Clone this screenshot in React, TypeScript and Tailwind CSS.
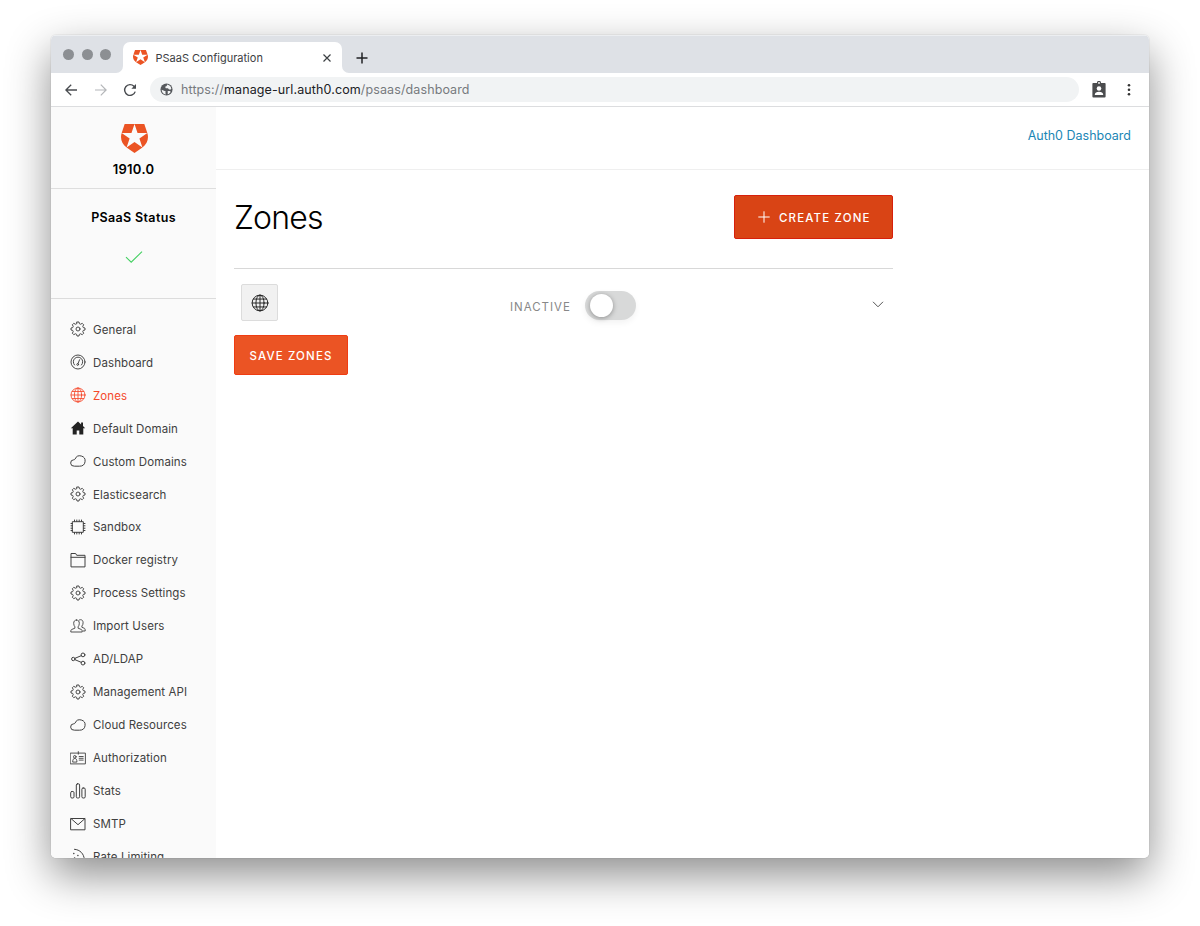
import React from "react";

type IconProps = { className?: string };

const stroke = {
  fill: "none",
  stroke: "currentColor",
  strokeWidth: 1,
  strokeLinecap: "round" as const,
  strokeLinejoin: "round" as const,
};

function Gear() {
  return (
    <svg viewBox="0 0 16 16" className="h-4 w-4" {...stroke} strokeWidth={0.95}>
      <path d="M7 1h2l.4 1.7 1.3.55 1.5-.95 1.5 1.5-.95 1.5.55 1.3L15 7v2l-1.7.4-.55 1.3.95 1.5-1.5 1.5-1.5-.95-1.3.55L9 15H7l-.4-1.7-1.3-.55-1.5.95-1.5-1.5.95-1.5-.55-1.3L1 9V7l1.7-.4.55-1.3-.95-1.5 1.5-1.5 1.5.95 1.3-.55z" />
      <circle cx="8" cy="8" r="2" />
    </svg>
  );
}

function Gauge() {
  return (
    <svg viewBox="0 0 16 16" className="h-4 w-4" {...stroke} strokeWidth={0.95}>
      <circle cx="8" cy="8" r="7" />
      <path d="M4.500 11A4.700 4.700 0 1 1 11.500 11" />
      <path d="M9.600 5.700 8 9.600" />
      <circle cx="7.700" cy="10.500" r=".9" />
    </svg>
  );
}

function Globe({ className = "h-4 w-4" }: IconProps) {
  return (
    <svg viewBox="0 0 16 16" className={className} {...stroke} strokeWidth={0.85}>
      <circle cx="8" cy="8" r="7" />
      <ellipse cx="8" cy="8" rx="3.6" ry="7" />
      <path d="M8 1v14M1 8h14M2.200 4.500h11.600M2.200 11.500h11.600" />
    </svg>
  );
}

function Home() {
  return (
    <svg viewBox="0 0 16 16" className="h-4 w-4">
      <path
        fill="#222"
        d="M8 1.400.8 8.300h1.900v6.200h4v-4h2.600v4h4V8.300h1.900L13 6.100V2.600h-1.900v1.800z"
      />
    </svg>
  );
}

function Cloud() {
  return (
    <svg viewBox="0 0 16 16" className="h-4 w-4" {...stroke}>
      <path d="M4 13.200a3.200 3.200 0 0 1-.3-6.400c.6 0 1-.2 1.400-.8A5.200 5.200 0 1 1 9.800 13.200z" />
    </svg>
  );
}

function Chip() {
  return (
    <svg viewBox="0 0 16 16" className="h-4 w-4" {...stroke}>
      <rect x="2.7" y="2.7" width="10.6" height="10.6" />
      <path d="M4.5 2.5V1M6.8 2.5V1M9.2 2.5V1M11.5 2.5V1M4.5 15v-1.5M6.8 15v-1.5M9.2 15v-1.5M11.5 15v-1.5M2.5 4.5H1M2.5 6.8H1M2.5 9.2H1M2.5 11.5H1M15 4.5h-1.5M15 6.8h-1.5M15 9.2h-1.5M15 11.5h-1.5" />
    </svg>
  );
}

function Folder() {
  return (
    <svg viewBox="0 0 16 16" className="h-4 w-4" {...stroke}>
      <path d="M1 14.5v-13h4.7l1 1.800H15v11.200zM1 5.300h14" />
    </svg>
  );
}

function Users() {
  return (
    <svg viewBox="0 0 16 16" className="h-4 w-4" {...stroke} strokeWidth={0.9}>
      <path d="M6.500 2C4.700 2 3.700 3.300 3.700 5.300c0 1.500.5 2.700 1.200 3.500v1.400L1.600 11.500c-.6.3-.8 1-.8 2.500h11.400c0-1.500-.2-2.200-.8-2.500L8.100 10.200V8.800c.7-.8 1.200-2 1.200-3.500C9.300 3.300 8.300 2 6.500 2z" />
      <path d="M9 2.200c.4-.4 1-.5 1.500-.5 1.700 0 2.600 1.200 2.600 3.100 0 1.400-.5 2.500-1.200 3.200v1.300l2.500 1c.6.3.8 1 .8 2.700h-2" />
    </svg>
  );
}

function Share() {
  return (
    <svg viewBox="0 0 16 16" className="h-4 w-4" {...stroke}>
      <circle cx="3.300" cy="8" r="1.700" />
      <circle cx="13" cy="3.900" r="1.900" />
      <circle cx="13" cy="12.100" r="1.900" />
      <path d="m5 7.300 6.200-2.600M5 8.700l6.200 2.600" />
    </svg>
  );
}

function IdCard() {
  return (
    <svg viewBox="0 0 16 16" className="h-4 w-4" {...stroke} strokeWidth={0.9}>
      <path d="M.6 3.100h14.800v10.800H.6zM8.300 1.600v2.600" />
      <circle cx="4.800" cy="6.800" r="1.300" />
      <path d="M2.700 11.700c0-2.300.7-3.200 2.100-3.200s2.100.9 2.100 3.200zM9.200 6.500h4M9.200 8.300h4M9.200 10.100h4" />
    </svg>
  );
}

function Bars() {
  return (
    <svg viewBox="0 0 16 16" className="h-4 w-4" {...stroke}>
      <rect x=".7" y="8.500" width="3.300" height="6.500" rx="1.200" />
      <rect x="6.300" y=".8" width="3.300" height="14.200" rx="1.200" />
      <rect x="11.900" y="5" width="3.300" height="10" rx="1.200" />
    </svg>
  );
}

function Mail() {
  return (
    <svg viewBox="0 0 16 16" className="h-4 w-4" {...stroke}>
      <path d="M1 2.500h14v11.300H1zM1.200 2.700 8 8.700l6.800-6" />
    </svg>
  );
}

function Rate() {
  return (
    <svg viewBox="0 0 16 16" className="h-4 w-4" {...stroke}>
      <path d="M4.500 1.300c5.500.3 9.500 4.500 9.800 10" />
      <path d="M3.700 5.500h.2M7.800 7.500h.2M4.500 10h.2" strokeWidth="1.300" />
    </svg>
  );
}

function Shield({ className }: IconProps) {
  return (
    <svg viewBox="1.500 0 21 24" preserveAspectRatio="none" className={className}>
      <path
        fill="#eb5424"
        d="M21.980 7.448L19.620 0H4.347L2.020 7.448c-1.352 4.312.03 9.206 3.815 12.015L12.007 24l6.157-4.552c3.755-2.810 5.182-7.688 3.815-12.015l-6.160 4.580 2.343 7.450-6.157-4.597-6.158 4.580 2.358-7.433-6.188-4.550 7.630-.045L12.008 0l2.356 7.404 7.615.044z"
      />
    </svg>
  );
}

const items: { label: string; Icon: () => React.ReactElement; active?: boolean }[] = [
  { label: "General", Icon: Gear },
  { label: "Dashboard", Icon: Gauge },
  { label: "Zones", Icon: () => <Globe />, active: true },
  { label: "Default Domain", Icon: Home },
  { label: "Custom Domains", Icon: Cloud },
  { label: "Elasticsearch", Icon: Gear },
  { label: "Sandbox", Icon: Chip },
  { label: "Docker registry", Icon: Folder },
  { label: "Process Settings", Icon: Gear },
  { label: "Import Users", Icon: Users },
  { label: "AD/LDAP", Icon: Share },
  { label: "Management API", Icon: Gear },
  { label: "Cloud Resources", Icon: Cloud },
  { label: "Authorization", Icon: IdCard },
  { label: "Stats", Icon: Bars },
  { label: "SMTP", Icon: Mail },
  { label: "Rate Limiting", Icon: Rate },
];

function TabStrip() {
  return (
    <div className="flex h-[38px] shrink-0 bg-white">
      <div className="flex w-[72px] items-center gap-[7.500px] rounded-br-[7px] border-t border-[#eceef1] bg-[#dee1e6] pl-3">
        <span className="h-[11px] w-[11px] rounded-full bg-[#8c8f93]" />
        <span className="h-[11px] w-[11px] rounded-full bg-[#8c8f93]" />
        <span className="h-[11px] w-[11px] rounded-full bg-[#8c8f93]" />
      </div>
      <div className="w-[219px] border-t border-[#eceef1] bg-[#dee1e6] pt-[6px]">
        <div className="flex h-[31px] items-center rounded-t-[7px] bg-white pl-2.5 pr-[11px]">
          <Shield className="h-[15px] w-[15px]" />
          <span className="ml-[7.500px] mt-px flex-1 text-[11px] text-[#3c4043]">PSaaS Configuration</span>
          <svg viewBox="0 0 8 8" className="h-2 w-2" fill="none" stroke="#3c4043" strokeWidth="1.200">
            <path d="m.5.5 7 7m0-7-7 7" />
          </svg>
        </div>
      </div>
      <div className="flex flex-1 items-center rounded-bl-[7px] border-t border-[#eceef1] bg-[#dee1e6] pl-[14px] pt-[7px]">
        <svg viewBox="0 0 12 12" className="h-3 w-3" fill="none" stroke="#202124" strokeWidth="1.500">
          <path d="M6 .5v11M.5 6h11" />
        </svg>
      </div>
    </div>
  );
}

function Toolbar() {
  return (
    <div className="flex h-[34px] shrink-0 items-center border-b border-[#dcdddf] bg-white pl-[14px] pr-[15px]">
      <svg viewBox="0 0 12 12" className="h-3 w-3" fill="none" stroke="#494c50" strokeWidth="1.300">
        <path d="M12 6H1M6.200.7.900 6l5.300 5.300" />
      </svg>
      <svg viewBox="0 0 12 12" className="ml-[18px] h-3 w-3" fill="none" stroke="#b4b6b9" strokeWidth="1.200">
        <path d="M0 6h11M5.800.7 11.100 6l-5.300 5.300" />
      </svg>
      <svg viewBox="0 0 14 14" className="ml-[16px] h-3.5 w-3.5" fill="none" stroke="#494c50" strokeWidth="1.400">
        <path d="M12.200 8.600A5.400 5.400 0 1 1 11 3.300l1.300 1.400" />
        <path d="M13 1v4.700H8.400z" fill="#494c50" stroke="none" />
      </svg>
      <div className="ml-[13px] flex h-[25px] w-[929px] items-center rounded-full bg-[#f1f3f4] pl-[10px]">
        <svg viewBox="0 0 14 14" className="h-[13px] w-[13px]">
          <circle cx="7" cy="7" r="6.500" fill="#55585c" />
          <path
            fill="#f1f3f4"
            d="M1.800 7.200 5 8.500c1.300.2 1.500.8.800 1.700l.4 2.200C3.700 12 1.800 10 1.800 7.200zM7.500 1.700c2.300.2 4.200 1.900 4.700 4.100l-.6 1.100H9.800L8.500 5.600H6.200L5.500 4.100 7.300 3.300zM8.300 8.500h2.300l.9.900c-.7 1.400-1.700 2.300-3.200 2.700z"
          />
        </svg>
        <span className="ml-[8px] mt-px text-[12.500px] tracking-[0.110px] text-[#777a7e]">
          https://<span className="text-[#202124]">manage-url.auth0.com</span>/psaas/dashboard
        </span>
      </div>
      <svg viewBox="0 0 14 18" className="ml-[13px] h-[17px] w-[14px]">
        <path fill="#4b4c4e" fillRule="evenodd" d="M1 2h3.800a2.200 2.200 0 0 1 4.400 0H13q1 0 1 1v13.500q0 1-1 1H1q-1 0-1-1V3q0-1 1-1zM7 1a1 1 0 1 0 0 2 1 1 0 0 0 0-2z" />
        <circle cx="7" cy="8" r="2.400" fill="#fff" />
        <path fill="#fff" d="M2.500 14.800c0-2.400 2-3.300 4.500-3.300s4.500.9 4.500 3.300z" />
      </svg>
      <svg viewBox="0 0 4 14" className="ml-auto mr-[3.500px] h-[14px] w-1" fill="#333">
        <circle cx="2" cy="2.300" r="1.300" />
        <circle cx="2" cy="6.800" r="1.300" />
        <circle cx="2" cy="11.300" r="1.300" />
      </svg>
    </div>
  );
}

function Sidebar() {
  return (
    <aside className="flex w-[165px] shrink-0 flex-col bg-[#fafafa]">
      <div className="flex h-[82px] shrink-0 flex-col items-center border-b border-[#dedede] pt-[17px]">
        <Shield className="ml-px h-[29px] w-[27px]" />
        <span className="mt-[7px] text-[13px] font-semibold leading-[18px] tracking-[0.300px] text-black">1910.0</span>
      </div>
      <div className="flex h-[110px] shrink-0 flex-col items-center border-b border-[#dcdcdc] pt-5">
        <span className="text-[12.500px] font-semibold leading-[18px] tracking-[0.350px] text-black">PSaaS Status</span>
        <svg viewBox="0 0 18 12" className="mt-6 h-3 w-[18px]" fill="none" stroke="#44d062" strokeWidth="1.100">
          <path d="m1 6.200 5.200 5L17 .6" />
        </svg>
      </div>
      <nav className="pt-[14px]">
        {items.map(({ label, Icon, active }) => (
          <a
            key={label}
            className={
              active
                ? "flex h-[32.940px] items-center pl-[18.500px] text-[#f5482a]"
                : "flex h-[32.940px] items-center pl-[18.500px] text-[#404040]"
            }
          >
            <Icon />
            <span className="ml-[7.500px] mt-0.5 whitespace-nowrap text-[11.500px] tracking-[0.100px]">{label}</span>
          </a>
        ))}
      </nav>
    </aside>
  );
}

function Main() {
  return (
    <main className="flex flex-1 flex-col">
      <header className="flex h-[63px] items-center justify-end border-b border-[#efefef] pb-[4px] pr-[18px]">
        <a className="text-[12.500px] text-[#1c86b5]">Auth0 Dashboard</a>
      </header>
      <section className="ml-[18px] w-[659px]">
        <div className="flex h-[99px] items-start justify-between border-b border-[#d8d8d8] pr-[0.500px] pt-[25px]">
          <h1 className="text-[32px] font-light leading-[46px] tracking-[-0.800px] text-black">Zones</h1>
          <button className="flex h-[44px] w-[159px] items-center rounded-[2px] border border-[#d7200c] bg-[#d94415] pl-[23.500px] text-white">
            <svg viewBox="0 0 12 12" className="-mt-px h-3 w-3" fill="none" stroke="currentColor">
              <path d="M6 .3v11.400M.3 6h11.400" />
            </svg>
            <span className="ml-[9px] mt-[3px] text-[11.500px] font-medium tracking-[1.160px]">CREATE ZONE</span>
          </button>
        </div>
        <div className="flex h-[66px] items-start pl-[7px] pt-[14px]">
          <div className="mt-px flex h-[37px] w-[37px] items-center justify-center rounded-[2px] border border-[#dcdcdc] bg-[#f1f1f1] text-[#222]">
            <Globe className="h-[18px] w-[18px]" />
          </div>
          <span className="ml-[232px] mt-[15px] w-[75px] text-[11.500px] leading-[18px] tracking-[0.980px] text-[#888]">INACTIVE</span>
          <div className="mt-[8px] flex h-[29px] w-[51px] items-center rounded-full bg-[#d8d9d9] pl-[5px] shadow-[0_3px_6px_rgba(0,0,0,0.050)]">
            <span className="h-[23px] w-[23px] rounded-full bg-white shadow-[0_1px_5px_rgba(0,0,0,0.350)]" />
          </div>
          <svg viewBox="0 0 12 7" className="ml-auto mr-[9px] mt-[18px] h-[7px] w-3" fill="none" stroke="#555">
            <path d="m1 .8 5 5 5-5" />
          </svg>
        </div>
        <button className="flex h-[40px] w-[114px] items-center justify-center rounded-[2px] border border-[#f03c12] bg-[#eb5424] pt-[3px] text-[11.500px] font-medium tracking-[1.140px] text-white">
          SAVE ZONES
        </button>
      </section>
    </main>
  );
}

export default function App() {
  return (
    <div className="h-[926px] w-[1200px] overflow-hidden bg-white pl-[51px] pt-[35px] font-[Inter,sans-serif]">
      <div className="h-[823px] w-[1098px] rounded-[5px] shadow-[0_0_1px_rgba(0,0,0,0.400),0_17px_44px_rgba(0,0,0,0.450)]">
        <div className="flex h-full flex-col overflow-hidden rounded-[5px] bg-white">
          <TabStrip />
          <Toolbar />
          <div className="flex min-h-0 flex-1 overflow-hidden">
            <Sidebar />
            <Main />
          </div>
        </div>
      </div>
    </div>
  );
}
